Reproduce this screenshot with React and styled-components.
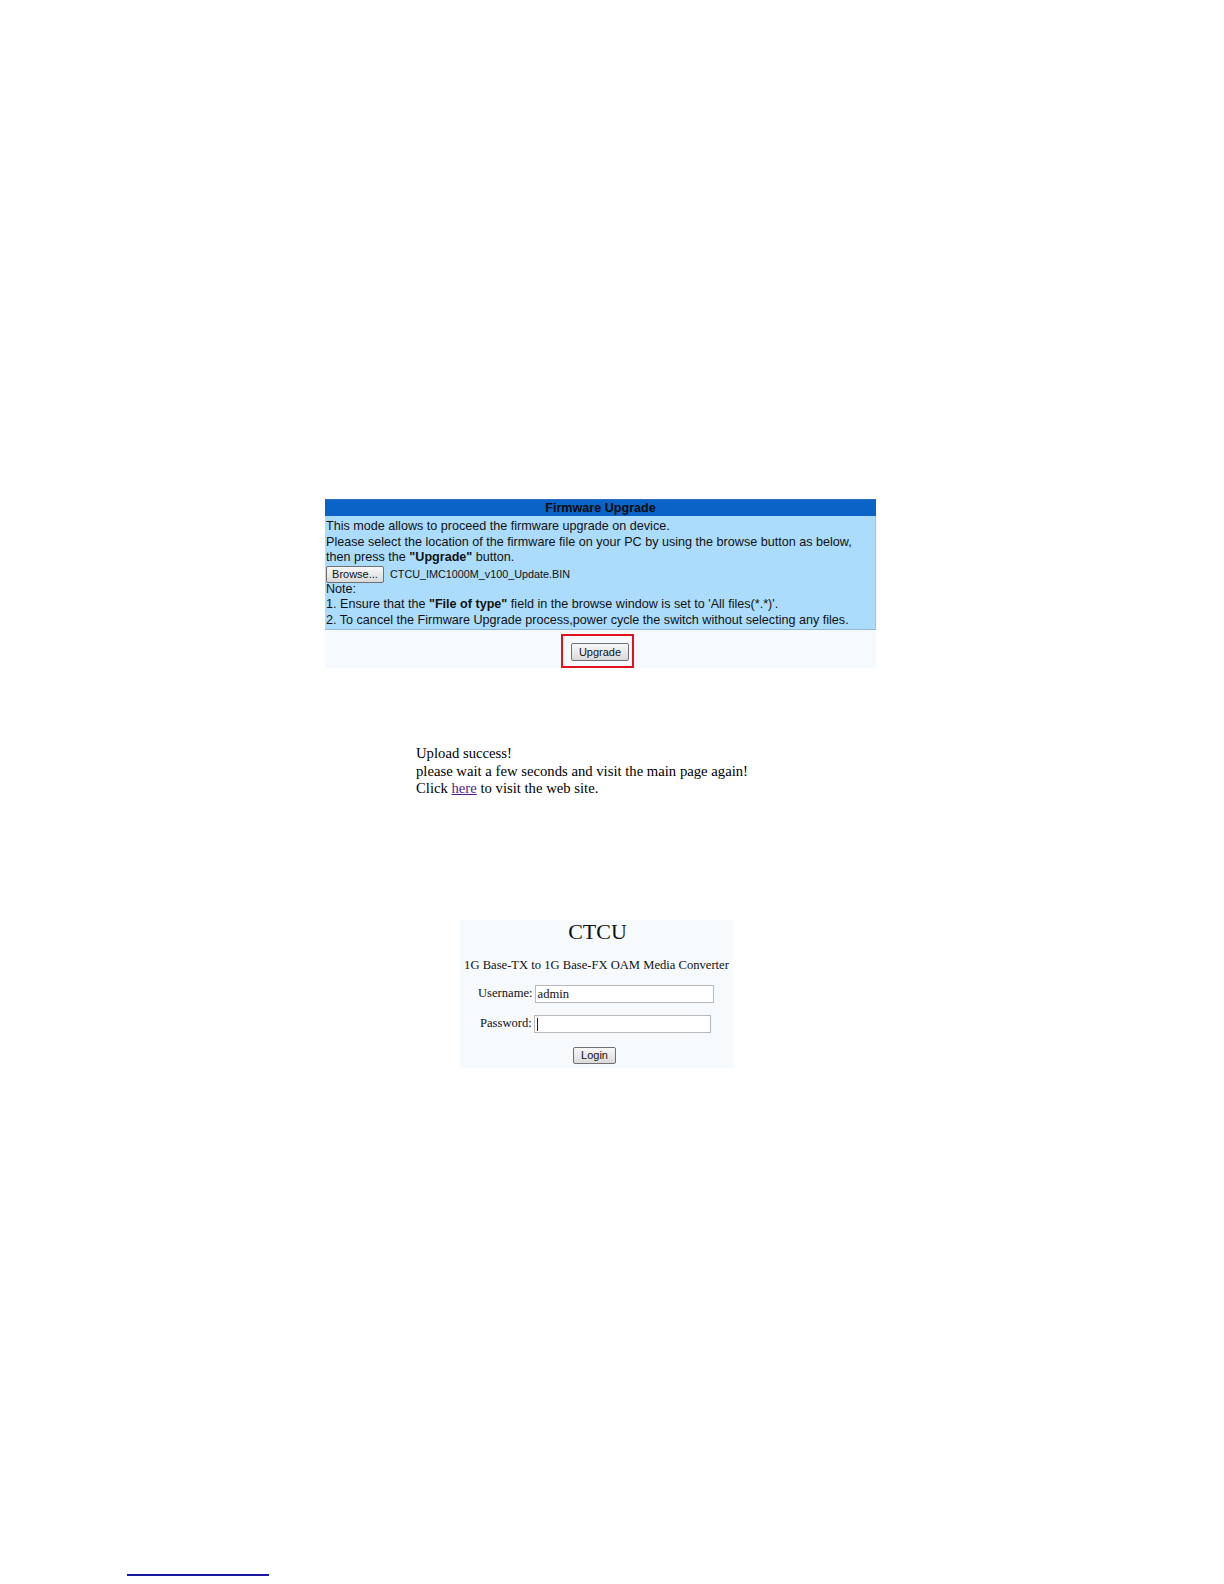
import React from 'react'
import styled, { createGlobalStyle } from 'styled-components'

const Global = createGlobalStyle`
  html, body { margin: 0; padding: 0; background: #ffffff; }
  body { width: 1224px; height: 1584px; overflow: hidden; }
`

const Page = styled.div`
  position: relative;
  width: 1224px;
  height: 1584px;
  padding-top: 499px;
  box-sizing: border-box;
  display: flex;
  flex-direction: column;
`

const Panel = styled.div`
  margin-left: 325px;
  width: 551px;
  font-family: "Liberation Sans", Arial, sans-serif;
  font-size: 12.6px;
  color: #111;
`

const PanelHeader = styled.div`
  height: 16px;
  line-height: 17px;
  background: #0a64c8;
  border-top: 1px solid #2a6fc0;
  text-align: center;
  font-weight: bold;
  color: #0b0b0b;
`

const PanelBody = styled.div`
  background: #acdcfb;
  padding: 3px 1px 1px;
  border-bottom: 1px solid #8fb9d6;
  border-right: 1px solid #9cc6e2;
`

const Line = styled.div`
  height: 15.5px;
  line-height: 15px;
  white-space: nowrap;
  display: flex;
  align-items: center;
  gap: 6px;
`

const FileRow = styled(Line)`
  height: 17px;
  margin: 0 0 -1px;
`

const FileName = styled.span`
  font-size: 10.8px;
`

const SmallButton = styled.button`
  font-family: "Liberation Sans", Arial, sans-serif;
  font-size: 11px;
  color: #111;
  width: ${p => p.$w}px;
  height: ${p => p.$h || 16}px;
  padding: 0;
  border: 1px solid #707070;
  border-radius: 2px;
  background: linear-gradient(#f8f8f8, #dadada);
  margin: 0;
`

const PanelFooter = styled.div`
  height: 38px;
  background: #f6fafe;
  display: flex;
  justify-content: center;
  padding-top: 4px;
  box-sizing: border-box;
`

const Highlight = styled.div`
  width: 73px;
  height: 34px;
  border: 2px solid #e0141c;
  box-sizing: border-box;
  padding: 7px 0 0 8px;
  margin-left: -6px;
`

const Message = styled.div`
  margin-top: 77px;
  margin-left: 416px;
  font-family: "Liberation Serif", "Times New Roman", serif;
  font-size: 14.7px;
  line-height: 17.6px;
  color: #000;
`

const Link = styled.a`
  color: #551a8b;
  text-decoration: underline;
`

const LoginBox = styled.div`
  margin-top: 122px;
  margin-left: 460px;
  width: 273px;
  height: 148px;
  background: #f7fafd;
  font-family: "Liberation Serif", "Times New Roman", serif;
  color: #111;
  display: flex;
  flex-direction: column;
`

const Title = styled.div`
  font-size: 22px;
  line-height: 24px;
  text-align: center;
  margin-left: 2px;
`

const Subtitle = styled.div`
  font-size: 12.6px;
  margin-top: 14px;
  line-height: 14px;
  white-space: nowrap;
  text-align: center;
`

const Field = styled.div`
  display: flex;
  align-items: center;
  font-size: 12.6px;
  margin-top: ${p => p.$top}px;
  padding-left: ${p => p.$left}px;
  gap: 2px;
`

const Input = styled.div`
  width: ${p => p.$w}px;
  height: 16px;
  border: 1px solid #b9b9b9;
  background: #fff;
  font-size: 12.6px;
  line-height: 16px;
  padding-left: 2px;
  box-sizing: content-box;
`

const Caret = styled.span`
  display: inline-block;
  width: 1px;
  height: 13px;
  background: #222;
  vertical-align: middle;
`

const FootRule = styled.div`
  position: absolute;
  left: 127px;
  top: 1574px;
  width: 142px;
  height: 2px;
  background: #1818a0;
`

export default function App() {
  return (
    <>
      <Global />
      <Page>
        <Panel>
          <PanelHeader>Firmware Upgrade</PanelHeader>
          <PanelBody>
            <Line>This mode allows to proceed the firmware upgrade on device.</Line>
            <Line>Please select the location of the firmware file on your PC by using the browse button as below,</Line>
            <Line><span>then press the <b>"Upgrade"</b> button.</span></Line>
            <FileRow>
              <SmallButton $w={58} $h={17}>Browse...</SmallButton>
              <FileName>CTCU_IMC1000M_v100_Update.BIN</FileName>
            </FileRow>
            <Line>Note:</Line>
            <Line><span>1. Ensure that the <b>"File of type"</b> field in the browse window is set to 'All files(*.*)'.</span></Line>
            <Line>2. To cancel the Firmware Upgrade process,power cycle the switch without selecting any files.</Line>
          </PanelBody>
          <PanelFooter>
            <Highlight>
              <SmallButton $w={58} $h={18}>Upgrade</SmallButton>
            </Highlight>
          </PanelFooter>
        </Panel>

        <Message>
          <div>Upload success!</div>
          <div>please wait a few seconds and visit the main page again!</div>
          <div>Click <Link href="#">here</Link> to visit the web site.</div>
        </Message>

        <LoginBox>
          <Title>CTCU</Title>
          <Subtitle>1G Base-TX to 1G Base-FX OAM Media Converter</Subtitle>
          <Field $top={13} $left={18}>
            <span>Username:</span>
            <Input $w={175}>admin</Input>
          </Field>
          <Field $top={12} $left={20}>
            <span>Password:</span>
            <Input $w={173}><Caret /></Input>
          </Field>
          <Field $top={14} $left={113}>
            <SmallButton $w={43} $h={17}>Login</SmallButton>
          </Field>
        </LoginBox>
      </Page>
      <FootRule />
    </>
  )
}
